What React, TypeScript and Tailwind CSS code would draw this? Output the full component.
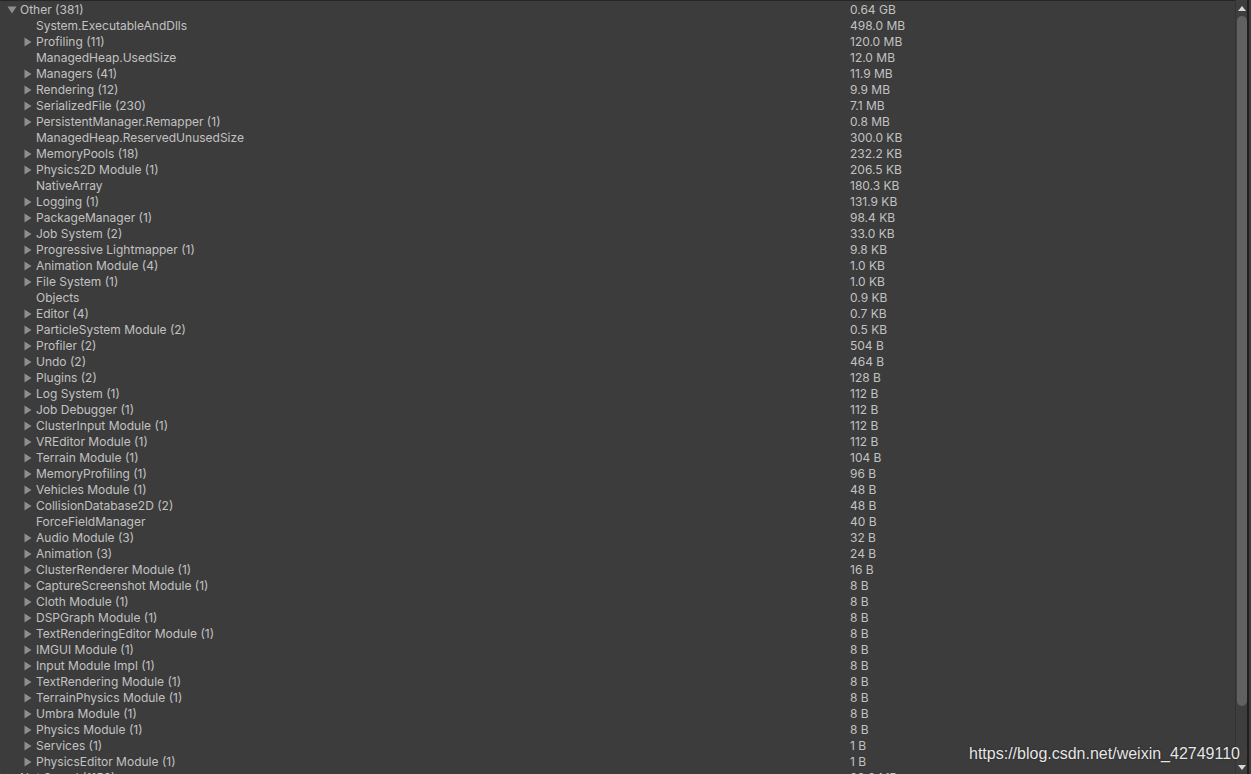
import React from "react"

interface Row {
  label: string
  size: string
  depth: number
  arrow?: "right" | "down"
}

const children: [string, string, boolean][] = [
  ["System.ExecutableAndDlls", "498.0 MB", false],
  ["Profiling (11)", "120.0 MB", true],
  ["ManagedHeap.UsedSize", "12.0 MB", false],
  ["Managers (41)", "11.9 MB", true],
  ["Rendering (12)", "9.9 MB", true],
  ["SerializedFile (230)", "7.1 MB", true],
  ["PersistentManager.Remapper (1)", "0.8 MB", true],
  ["ManagedHeap.ReservedUnusedSize", "300.0 KB", false],
  ["MemoryPools (18)", "232.2 KB", true],
  ["Physics2D Module (1)", "206.5 KB", true],
  ["NativeArray", "180.3 KB", false],
  ["Logging (1)", "131.9 KB", true],
  ["PackageManager (1)", "98.4 KB", true],
  ["Job System (2)", "33.0 KB", true],
  ["Progressive Lightmapper (1)", "9.8 KB", true],
  ["Animation Module (4)", "1.0 KB", true],
  ["File System (1)", "1.0 KB", true],
  ["Objects", "0.9 KB", false],
  ["Editor (4)", "0.7 KB", true],
  ["ParticleSystem Module (2)", "0.5 KB", true],
  ["Profiler (2)", "504 B", true],
  ["Undo (2)", "464 B", true],
  ["Plugins (2)", "128 B", true],
  ["Log System (1)", "112 B", true],
  ["Job Debugger (1)", "112 B", true],
  ["ClusterInput Module (1)", "112 B", true],
  ["VREditor Module (1)", "112 B", true],
  ["Terrain Module (1)", "104 B", true],
  ["MemoryProfiling (1)", "96 B", true],
  ["Vehicles Module (1)", "48 B", true],
  ["CollisionDatabase2D (2)", "48 B", true],
  ["ForceFieldManager", "40 B", false],
  ["Audio Module (3)", "32 B", true],
  ["Animation (3)", "24 B", true],
  ["ClusterRenderer Module (1)", "16 B", true],
  ["CaptureScreenshot Module (1)", "8 B", true],
  ["Cloth Module (1)", "8 B", true],
  ["DSPGraph Module (1)", "8 B", true],
  ["TextRenderingEditor Module (1)", "8 B", true],
  ["IMGUI Module (1)", "8 B", true],
  ["Input Module Impl (1)", "8 B", true],
  ["TextRendering Module (1)", "8 B", true],
  ["TerrainPhysics Module (1)", "8 B", true],
  ["Umbra Module (1)", "8 B", true],
  ["Physics Module (1)", "8 B", true],
  ["Services (1)", "1 B", true],
  ["PhysicsEditor Module (1)", "1 B", true],
]

const rows: Row[] = [
  { label: "Other (381)", size: "0.64 GB", depth: 0, arrow: "down" },
  ...children.map(([label, size, arrow]) => ({
    label,
    size,
    depth: 1,
    arrow: arrow ? ("right" as const) : undefined,
  })),
  { label: "Not Saved (1156)", size: "20.2 MB", depth: 0, arrow: "right" },
]

function Arrow({ dir }: { dir: "right" | "down" }) {
  if (dir === "down") {
    return (
      <svg width="10" height="8" viewBox="0 0 10 8" className="shrink-0">
        <path d="M0.5 0.5 L9.5 0.5 L5 7.5 Z" fill="#8e8e8e" />
      </svg>
    )
  }
  return (
    <svg width="8" height="10" viewBox="0 0 8 10" className="shrink-0">
      <path d="M0.5 0.5 L7.5 5 L0.5 9.5 Z" fill="#8e8e8e" />
    </svg>
  )
}

export default function App() {
  return (
    <div
      className="relative flex h-[774px] w-[1251px] overflow-hidden bg-[#3c3c3c] text-[12px] text-[#c2c2c2]"
      style={{ fontFamily: "Inter, 'Noto Sans', sans-serif" }}
    >
      <div className="flex flex-1 flex-col border-t border-[#262626] pt-px">
        {rows.map((row, i) => (
          <div key={i} className="flex h-4 shrink-0 items-center leading-4">
            <div className="flex w-[850px] items-center">
              <div
                className={`flex items-center ${
                  row.depth === 0 ? "w-[20px] pl-[7px]" : "ml-[16px] w-[20px] justify-end pr-[4px]"
                }`}
              >
                {row.arrow && <Arrow dir={row.arrow} />}
              </div>
              <span className="whitespace-nowrap">{row.label}</span>
            </div>
            <span className="whitespace-nowrap">{row.size}</span>
          </div>
        ))}
      </div>

      {/* scrollbar */}
      <div className="flex w-[16px] shrink-0">
        <div className="flex w-[12px] flex-col items-center border-l border-[#333333] bg-[#3e3e3e]">
          <div className="flex h-[16px] items-center justify-center">
            <svg width="8" height="5" viewBox="0 0 8 5">
              <path d="M0 5 L4 0 L8 5 Z" fill="#d8d8d8" />
            </svg>
          </div>
          <div className="h-[690px] w-[10px] rounded-full bg-[#616161]" />
          <div className="flex-1" />
          <div className="flex h-[14px] items-center justify-center">
            <svg width="8" height="5" viewBox="0 0 8 5">
              <path d="M0 0 L8 0 L4 5 Z" fill="#d8d8d8" />
            </svg>
          </div>
        </div>
        <div className="w-[2px] bg-[#1f1f1f]" />
        <div className="flex-1 bg-[#3c3c3c]" />
      </div>

      <div
        className="absolute left-[969px] top-[744px] text-[16px] leading-5 text-[#e6e6e6]"
        style={{ fontFamily: "'Liberation Sans', Arial, sans-serif", textShadow: "0 0 2px rgba(0,0,0,0.6)" }}
      >
        https://blog.csdn.net/weixin_42749110
      </div>
    </div>
  )
}
